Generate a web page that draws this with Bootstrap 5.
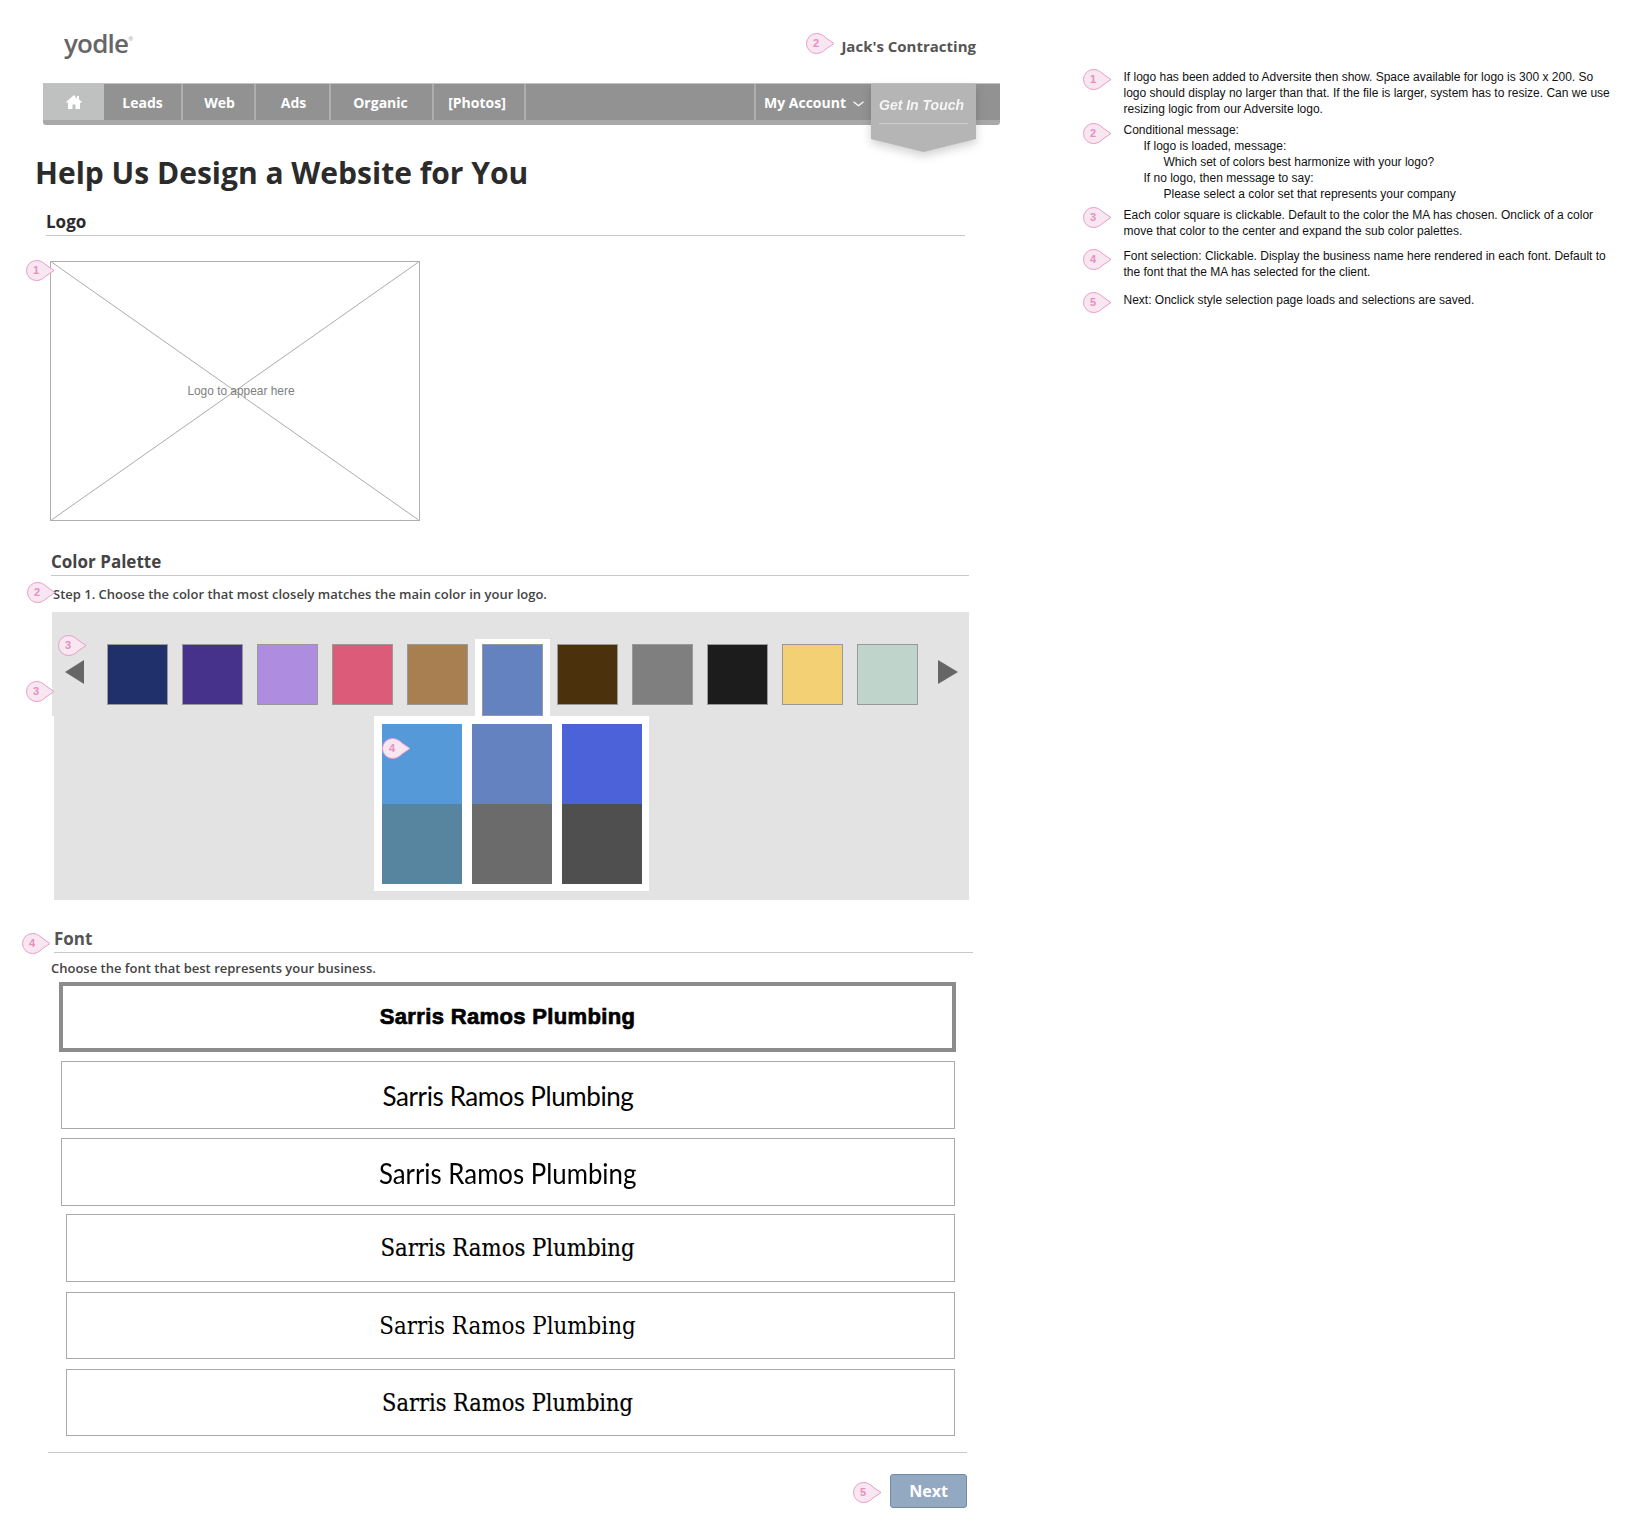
<!DOCTYPE html>
<html lang="en">
<head>
    <meta charset="UTF-8">
    <meta name="viewport" content="width=device-width, initial-scale=1.0">
    <title>Help Us Design a Website for You</title>
    <link href="https://cdn.jsdelivr.net/npm/bootstrap@5.3.0/dist/css/bootstrap.min.css" rel="stylesheet">
    <script src="https://cdn.jsdelivr.net/npm/bootstrap@5.3.0/dist/js/bootstrap.bundle.min.js"></script>
    <style>
        body {
            background: #fff;
            font-family: "Open Sans", sans-serif;
            color: #444;
        }
        .sheet {
            position: relative;
            width: 1628px;
            height: 1522px;
            overflow: hidden;
        }
        .wire {
            width: 1010px;
            flex: none;
        }
        .top-head {
            height: 83px;
            padding: 0 34px 4px 64px;
        }
        .brand-word {
            padding-top: 8px;
            font-size: 26px;
            font-weight: 600;
            color: #666;
            letter-spacing: -0.8px;
        }
        .brand-word sup {
            font-size: 6px;
            color: #aaa;
            top: -2em;
        }
        .client-name {
            font-size: 15px;
            font-weight: 700;
            color: #555;
            padding-top: 14px;
        }

        /* main nav */
        .main-nav {
            position: relative;
            margin-left: 43px;
            width: 957px;
            height: 42px;
            background: #929292;
            border-top: 1px solid #c4c4c4;
            border-bottom: 5px solid #a9a9a9;
            border-radius: 0 0 3px 3px;
            flex-wrap: nowrap;
        }
        .main-nav .nav-link {
            display: flex;
            align-items: center;
            justify-content: center;
            height: 36px;
            padding: 0;
            color: #fff;
            font-size: 14px;
            font-weight: 700;
            border-right: 2px solid #aeaeae;
        }
        .tab-home .nav-link { width: 61px; background: #bfc1c0; border-right: 0; }
        .tab-leads .nav-link { width: 79px; }
        .main-nav .tab-web .nav-link { width: 73px; padding-left: 2px; }
        .main-nav .tab-ads .nav-link { width: 75px; padding-left: 2px; }
        .main-nav .tab-organic .nav-link { width: 103px; padding-right: 2px; }
        .main-nav .tab-photos .nav-link { width: 92px; padding-right: 4px; }
        .tab-account { margin-left: auto; margin-right: 128px; }
        .tab-account .nav-link {
            width: 118px;
            gap: 7px;
            border-right: 0;
            border-left: 2px solid #aeaeae;
        }
        .tab-account svg { margin-top: 3px; }
        .touch-wrap {
            position: absolute;
            left: 828px;
            top: 0;
            filter: drop-shadow(0 4px 5px rgba(0, 0, 0, 0.18));
        }
        .touch-tab {
            width: 105px;
            height: 68px;
            padding: 0 8px;
            background: #b5b5b5;
            clip-path: polygon(0 0, 100% 0, 100% 81%, 50% 100%, 0 81%);
        }
        .touch-tab span {
            display: block;
            height: 40px;
            padding-top: 12px;
            font: italic 700 14px/18px "Liberation Sans", sans-serif;
            color: #f5f5f5;
            border-bottom: 1px solid #cfcfcf;
        }

        .page-title {
            margin: 28px 0 0 35px;
            font-size: 30px;
            line-height: 40px;
            font-weight: 700;
            color: #2b2b2b;
        }
        .block-head {
            width: 919px;
            height: 26px;
            margin-bottom: 0;
            font-size: 17px;
            line-height: 24px;
            font-weight: 700;
            border-bottom: 1px solid #c9c9c9;
        }
        .head-logo { margin: 17px 0 0 46px; color: #2b2b2b; }
        .head-palette { margin: 29px 0 0 51px; width: 918px; color: #444; }
        .head-font { margin: 27px 0 0 54px; color: #555; }
        .logo-box {
            display: block;
            margin: 25px 0 0 50px;
            border: 1px solid #aeaeae;
        }
        .logo-box text {
            font: 12px "Liberation Sans", sans-serif;
            fill: #808080;
        }
        .step-line {
            margin: 8px 0 0 53px;
            font-size: 13px;
            line-height: 20px;
            font-weight: 600;
        }
        .font-line {
            margin: 5px 0 0 51px;
            font-size: 13px;
            line-height: 20px;
            font-weight: 600;
        }

        /* palette */
        .palette-top {
            margin: 8px 0 0 52px;
            width: 917px;
            height: 104px;
            padding: 32px 0 0 13px;
            background: #e3e3e3;
        }
        .arrow-left, .arrow-right {
            width: 0;
            height: 0;
            margin-top: 16px;
            border-top: 12px solid transparent;
            border-bottom: 12px solid transparent;
        }
        .arrow-left { border-right: 19px solid #666; margin-right: 23px; }
        .arrow-right { border-left: 20px solid #666; margin-left: 20px; }
        .swatch-row { gap: 14px; }
        .swatch-item {
            width: 61px;
            height: 61px;
            border: 1px solid #999;
        }
        .swatch-item.picked {
            height: 72px;
            box-shadow: -7px 0 #fff, 7px 0 #fff, 0 -5px #fff, -7px -5px #fff, 7px -5px #fff;
        }
        .palette-sub {
            margin-left: 54px;
            width: 915px;
            height: 184px;
            padding-left: 320px;
            background: #e3e3e3;
        }
        .sub-set {
            position: relative;
            width: 275px;
            height: 175px;
            padding: 8px;
            background: #fff;
            grid-template-columns: repeat(3, 80px);
            grid-auto-rows: 80px;
            column-gap: 10px;
        }

        /* font choices */
        .font-choice {
            height: 67px;
            margin-top: 10px;
            margin-left: 61px;
            width: 894px;
            color: #000;
            border: 1px solid #aaa;
        }
        .font-choice.picked {
            height: 70px;
            width: 897px;
            margin: 4px 0 0 59px;
            border: 4px solid #8c8c8c;
        }
        .font-choice.tall { height: 68px; }
        .font-choice.near { margin-top: 9px; padding-top: 1px; }
        .font-choice.nearer { margin-top: 8px; }
        .font-choice.indent {
            margin-left: 66px;
            width: 889px;
            padding-right: 6px;
        }
        .face-a { font: 700 22px "Liberation Sans", sans-serif; -webkit-text-stroke: 0.7px #000; letter-spacing: 0.35px; }
        .face-b { font: 400 26px Lato, sans-serif; letter-spacing: -0.400px; }
        .face-c { display: inline-block; font: 400 29px Lato, sans-serif; transform: scaleX(0.890); }
        .face-d { font: 400 23.600px "DejaVu Serif Condensed", "DejaVu Serif", serif; -webkit-text-stroke: 0.2px #000; }
        .face-e { font: 400 23.800px "DejaVu Serif Condensed", "DejaVu Serif", serif; }
        .face-f { font: 400 23.300px "DejaVu Serif Condensed", "DejaVu Serif", serif; -webkit-text-stroke: 0.2px #000; }
        .foot-rule {
            width: 919px;
            margin: 16px 0 0 48px;
            border: 0;
            border-top: 1px solid #c9c9c9;
            opacity: 1;
        }
        .next-btn {
            display: block;
            width: 77px;
            height: 34px;
            margin: 21px 0 0 890px;
            padding: 0;
            font-size: 16px;
            font-weight: 700;
            color: #fff;
            background: #93a9c2;
            border: 1px solid #6f8bab;
            border-radius: 3px;
        }

        /* annotation list */
        .notes {
            margin-left: 113.500px;
            width: 490px;
            padding-top: 69px;
            font: 12px/16px "Liberation Sans", sans-serif;
            color: #111;
        }
        .notes p { margin: 0; }
        .gap-a { margin-top: 5px !important; }
        .gap-b { margin-top: 9px !important; }
        .gap-c { margin-top: 12px !important; }
        .lvl-1 { padding-left: 20px; }
        .lvl-2 { padding-left: 40px; }

        /* pink annotation pins */
        .pin {
            position: absolute;
            width: 29px;
            height: 21px;
        }
        .pin svg { display: block; width: 29px; height: 21px; }
        .pin b {
            position: absolute;
            left: 0;
            top: 0;
            width: 20px;
            font: 700 11px/21px "Liberation Sans", sans-serif;
            text-align: center;
            color: #e58fc3;
        }
        .pin-a { left: 806px; top: 33px; }
        .pin-b { left: 26px; top: 260px; }
        .pin-c { left: 27px; top: 582px; }
        .pin-d { left: 58px; top: 635px; }
        .pin-e { left: 26px; top: 681px; }
        .pin-f { left: 382px; top: 738px; }
        .pin-g { left: 22px; top: 933px; }
        .pin-h { left: 853px; top: 1482px; }
        .pin-n1 { left: 1083px; top: 69px; }
        .pin-n2 { left: 1083px; top: 123px; }
        .pin-n3 { left: 1083px; top: 207px; }
        .pin-n4 { left: 1083px; top: 249px; }
        .pin-n5 { left: 1083px; top: 292px; }
    </style>
</head>
<body>
    <svg width="0" height="0" class="d-block">
        <symbol id="pin-shape" viewBox="0 0 29 21">
            <path d="M10.5 .5C14 .5 17 2 20 5l8 5.5-8 5.500C17 19 14 20.500 10.500 20.500a10 10 0 0 1 0-20z" fill="#f8e6f1" stroke="#e99cca"/>
        </symbol>
    </svg>

    <div class="sheet d-flex">
        <div class="wire">
            <header class="top-head d-flex justify-content-between align-items-center">
                <div class="brand-word">yodle<sup>®</sup></div>
                <div class="client-name">Jack's Contracting</div>
            </header>

            <ul class="nav main-nav">
                <li class="nav-item tab-home">
                    <a class="nav-link" href="#" aria-label="Home">
                        <svg width="16" height="14" viewBox="0 0 16 14"><path d="M8 0L0 7l1 1 1-.8V14h4.500V9.500h3V14H14V7.200l1 .8 1-1-3-2.600V1h-2v2.700z" fill="#fff"/></svg>
                    </a>
                </li>
                <li class="nav-item tab-leads"><a class="nav-link" href="#">Leads</a></li>
                <li class="nav-item tab-web"><a class="nav-link" href="#">Web</a></li>
                <li class="nav-item tab-ads"><a class="nav-link" href="#">Ads</a></li>
                <li class="nav-item tab-organic"><a class="nav-link" href="#">Organic</a></li>
                <li class="nav-item tab-photos"><a class="nav-link" href="#">[Photos]</a></li>
                <li class="nav-item tab-account">
                    <a class="nav-link" href="#">My Account
                        <svg width="11" height="6" viewBox="0 0 11 6"><path d="M.5.800l5 4 5-4" fill="none" stroke="#fff" stroke-width="1.200"/></svg>
                    </a>
                </li>
                <li class="touch-wrap">
                    <div class="touch-tab"><span>Get In Touch</span></div>
                </li>
            </ul>

            <h1 class="page-title">Help Us Design a Website for You</h1>

            <h2 class="block-head head-logo">Logo</h2>
            <svg class="logo-box" width="370" height="260" viewBox="0 0 370 260">
                <line x1="0" y1="0" x2="370" y2="260" stroke="#aaa"/>
                <line x1="370" y1="0" x2="0" y2="260" stroke="#aaa"/>
                <text x="191" y="134" text-anchor="middle">Logo to appear here</text>
            </svg>

            <h2 class="block-head head-palette">Color Palette</h2>
            <p class="step-line mb-0">Step 1. Choose the color that most closely matches the main color in your logo.</p>

            <div class="palette-top d-flex align-items-start">
                <span class="arrow-left"></span>
                <div class="swatch-row d-flex align-items-start">
                    <div class="swatch-item" style="background:#20306a"></div>
                    <div class="swatch-item" style="background:#46328a"></div>
                    <div class="swatch-item" style="background:#ae8cdf"></div>
                    <div class="swatch-item" style="background:#db5b79"></div>
                    <div class="swatch-item" style="background:#a87f51"></div>
                    <div class="swatch-item picked" style="background:#6482c0"></div>
                    <div class="swatch-item" style="background:#4b320d"></div>
                    <div class="swatch-item" style="background:#7f7f7f"></div>
                    <div class="swatch-item" style="background:#1c1c1c"></div>
                    <div class="swatch-item" style="background:#f3d073"></div>
                    <div class="swatch-item" style="background:#bfd4cb"></div>
                </div>
                <span class="arrow-right"></span>
            </div>
            <div class="palette-sub">
                <div class="sub-set d-grid">
                    <div style="background:#5599d9"></div>
                    <div style="background:#6482c0"></div>
                    <div style="background:#4c62d8"></div>
                    <div style="background:#57849e"></div>
                    <div style="background:#6b6b6b"></div>
                    <div style="background:#4f4f4f"></div>
                </div>
            </div>

            <h2 class="block-head head-font">Font</h2>
            <p class="font-line mb-0">Choose the font that best represents your business.</p>

            <div class="font-choice picked d-flex align-items-center justify-content-center"><span class="face-a">Sarris Ramos Plumbing</span></div>
            <div class="font-choice near tall d-flex align-items-center justify-content-center"><span class="face-b">Sarris Ramos Plumbing</span></div>
            <div class="font-choice near tall d-flex align-items-center justify-content-center"><span class="face-c">Sarris Ramos Plumbing</span></div>
            <div class="font-choice nearer tall indent d-flex align-items-center justify-content-center"><span class="face-d">Sarris Ramos Plumbing</span></div>
            <div class="font-choice indent d-flex align-items-center justify-content-center"><span class="face-e">Sarris Ramos Plumbing</span></div>
            <div class="font-choice indent d-flex align-items-center justify-content-center"><span class="face-f">Sarris Ramos Plumbing</span></div>

            <hr class="foot-rule">
            <button type="button" class="btn next-btn">Next</button>
        </div>

        <aside class="notes">
            <p>If logo has been added to Adversite then show. Space available for logo is 300 x 200. So logo should display no larger than that. If the file is larger, system has to resize. Can we use resizing logic from our Adversite logo.</p>
            <div class="gap-a">
                <p>Conditional message:</p>
                <p class="lvl-1">If logo is loaded, message:</p>
                <p class="lvl-2">Which set of colors best harmonize with your logo?</p>
                <p class="lvl-1">If no logo, then message to say:</p>
                <p class="lvl-2">Please select a color set that represents your company</p>
            </div>
            <p class="gap-a">Each color square is clickable. Default to the color the MA has chosen. Onclick of a color move that color to the center and expand the sub color palettes.</p>
            <p class="gap-b">Font selection: Clickable. Display the business name here rendered in each font. Default to the font that the MA has selected for the client.</p>
            <p class="gap-c">Next: Onclick style selection page loads and selections are saved.</p>
        </aside>

        <span class="pin pin-a"><svg><use href="#pin-shape"/></svg><b>2</b></span>
        <span class="pin pin-b"><svg><use href="#pin-shape"/></svg><b>1</b></span>
        <span class="pin pin-c"><svg><use href="#pin-shape"/></svg><b>2</b></span>
        <span class="pin pin-d"><svg><use href="#pin-shape"/></svg><b>3</b></span>
        <span class="pin pin-e"><svg><use href="#pin-shape"/></svg><b>3</b></span>
        <span class="pin pin-f"><svg><use href="#pin-shape"/></svg><b>4</b></span>
        <span class="pin pin-g"><svg><use href="#pin-shape"/></svg><b>4</b></span>
        <span class="pin pin-h"><svg><use href="#pin-shape"/></svg><b>5</b></span>
        <span class="pin pin-n1"><svg><use href="#pin-shape"/></svg><b>1</b></span>
        <span class="pin pin-n2"><svg><use href="#pin-shape"/></svg><b>2</b></span>
        <span class="pin pin-n3"><svg><use href="#pin-shape"/></svg><b>3</b></span>
        <span class="pin pin-n4"><svg><use href="#pin-shape"/></svg><b>4</b></span>
        <span class="pin pin-n5"><svg><use href="#pin-shape"/></svg><b>5</b></span>
    </div>
</body>
</html>
